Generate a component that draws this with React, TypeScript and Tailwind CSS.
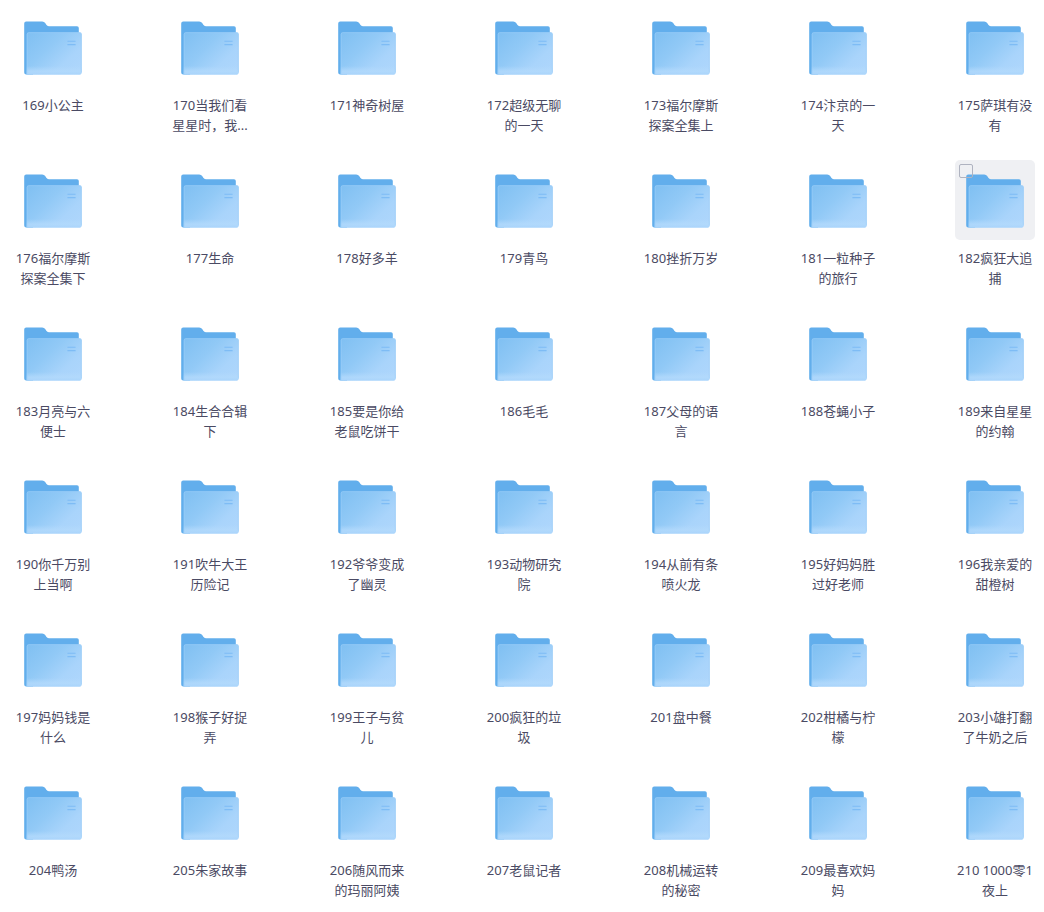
import { useState } from 'react';

const folders = [
    '169小公主', '170当我们看星星时，我...', '171神奇树屋', '172超级无聊的一天', '173福尔摩斯探案全集上', '174汴京的一天', '175萨琪有没有',
    '176福尔摩斯探案全集下', '177生命', '178好多羊', '179青鸟', '180挫折万岁', '181一粒种子的旅行', '182疯狂大追捕',
    '183月亮与六便士', '184生合合辑下', '185要是你给老鼠吃饼干', '186毛毛', '187父母的语言', '188苍蝇小子', '189来自星星的约翰',
    '190你千万别上当啊', '191吹牛大王历险记', '192爷爷变成了幽灵', '193动物研究院', '194从前有条喷火龙', '195好妈妈胜过好老师', '196我亲爱的甜橙树',
    '197妈妈钱是什么', '198猴子好捉弄', '199王子与贫儿', '200疯狂的垃圾', '201盘中餐', '202柑橘与柠檬', '203小雄打翻了牛奶之后',
    '204鸭汤', '205朱家故事', '206随风而来的玛丽阿姨', '207老鼠记者', '208机械运转的秘密', '209最喜欢妈妈', '210 1000零1夜上',
];

function FolderIcon() {
    return (
        <svg viewBox="0 0 80 80" className="size-20" aria-hidden="true">
            <path
                d="M13.2 14.4H29.2Q31.2 14.4 32.2 16L33.3 17.8Q34.2 19.2 35.8 19.2H64Q65.8 19.2 65.8 21V60H20V67.6H13.2Q11.2 67.6 11.2 65.6V16.4Q11.2 14.4 13.2 14.4Z"
                fill="#62aeec"
            />
            <path d="M15.7 25.2H66.6Q68.8 25.2 68.8 27.4V64.8Q68.8 67.6 66 67.6H13.7V27.2Q13.7 25.2 15.7 25.2Z" fill="url(#folder-front)" />
            <path d="M13.7 59H68.8V64.8Q68.8 67.6 66 67.6H13.7Z" fill="url(#folder-base)" />
            <path d="M14.2 67V27.4Q14.2 25.7 15.9 25.7H66.6Q68.3 25.7 68.3 27.4V64.8" fill="none" stroke="#9ccdf8" strokeOpacity="0.55" />
            <path d="M54.4 34.3H62.6M54.4 37.6H62.6" stroke="#7ebcf5" strokeWidth="1.1" />
        </svg>
    );
}

export default function App() {
    const [active, setActive] = useState<string>('182疯狂大追捕');
    const [checked, setChecked] = useState<string[]>([]);

    const toggle = (name: string) => {
        setChecked((prev) => (prev.includes(name) ? prev.filter((n) => n !== name) : [...prev, name]));
    };

    return (
        <main className="bg-white pt-[7px] pr-[9px] pb-3 pl-[13px] font-['Noto_Sans','Noto_Sans_CJK_SC',sans-serif]">
            <svg className="absolute size-0" aria-hidden="true">
                <defs>
                    <linearGradient id="folder-front" x1="0" y1="0.05" x2="1" y2="0.85">
                        <stop offset="0" stopColor="#80c0f2" />
                        <stop offset="0.4" stopColor="#91c9f6" />
                        <stop offset="0.75" stopColor="#a9d4fb" />
                        <stop offset="1" stopColor="#aed6fc" />
                    </linearGradient>
                    <linearGradient id="folder-base" x1="0" y1="0" x2="0" y2="1">
                        <stop offset="0" stopColor="#b3dafc" stopOpacity="0" />
                        <stop offset="0.6" stopColor="#b3dafc" stopOpacity="0.8" />
                        <stop offset="1" stopColor="#a9d4fb" />
                    </linearGradient>
                </defs>
            </svg>
            <ul className="grid grid-cols-[repeat(7,80px)] justify-between gap-y-[25px]">
                {folders.map((name) => (
                    <li key={name} className="relative" onMouseEnter={() => setActive(name)}>
                        <button type="button" className="flex min-h-32 w-20 flex-col items-center gap-2">
                            <span className={active === name ? 'rounded-[5px] bg-[#eff0f3]' : 'rounded-[5px]'}>
                                <FolderIcon />
                            </span>
                            <span className="w-full text-center text-[13px] leading-5 break-all text-[#4a4a63]">{name}</span>
                        </button>
                        {(active === name || checked.includes(name)) && (
                            <input
                                type="checkbox"
                                aria-label={name}
                                checked={checked.includes(name)}
                                onChange={() => toggle(name)}
                                className="absolute top-1 left-1 size-3.5 appearance-none rounded-[2px] border border-[#afb3c0] checked:bg-[#62aeec]"
                            />
                        )}
                    </li>
                ))}
            </ul>
        </main>
    );
}
